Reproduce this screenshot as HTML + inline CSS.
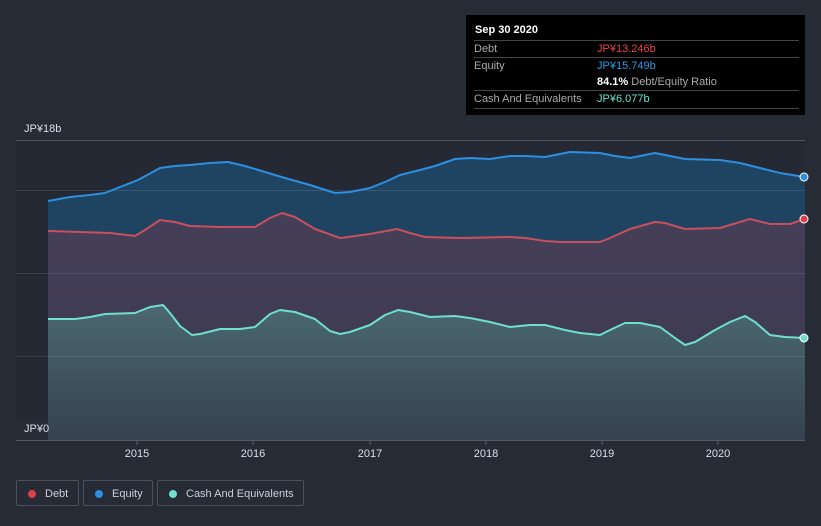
<!DOCTYPE html>
<html><head><meta charset="utf-8"><style>
body{margin:0;width:821px;height:526px;background:#262b36;font-family:"Liberation Sans",sans-serif;overflow:hidden;position:relative}
.tip{position:absolute;left:466px;top:15px;width:339px;height:100px;background:#000;color:#fff;font-size:11px}
.tip .r{position:absolute;left:8px;right:6px;border-top:1px solid #444;height:17px;line-height:17px;color:#aaa}
.leg{position:absolute;top:480px;height:26px;border:1px solid #4a505c;border-radius:2px;color:#ccd;font-size:11px;line-height:26px;box-sizing:border-box}
.leg i{position:absolute;left:11px;top:9px;width:8px;height:8px;border-radius:50%}
</style></head><body>
<svg width="821" height="526" style="position:absolute;left:0;top:0">
<rect x="16" y="140" width="789" height="300" fill="#242934"/>
<polygon fill="#1f4461" points="48,440 48,201 70,197 90,195 105,193 120,187 138,180 160,168 175,166 190,165 210,163 228,162 245,166 265,172 285,178 310,185 335,193 350,192 370,188 385,182 400,175 420,170 435,166 455,159 470,158 490,159 510,156 525,156 545,157 570,152 600,153 615,156 630,158 655,153 665,155 685,159 720,160 740,163 760,168 780,173 805,177 805,440"/>
<defs>
<linearGradient id="d" x1="0" y1="0" x2="0" y2="1"><stop offset="0" stop-color="#453f58"/><stop offset="1" stop-color="#3b3850"/></linearGradient>
<linearGradient id="g" x1="0" y1="0" x2="0" y2="1"><stop offset="0" stop-color="#4b6870"/><stop offset="1" stop-color="#35424f"/></linearGradient></defs>
<polygon fill="url(#d)" points="48,440 48,231 80,232 110,233 135,236 145,230 160,220 175,222 190,226 220,227 255,227 270,218 282,213 295,217 315,229 340,238 370,234 397,229 410,233 425,237 460,238 510,237 525,238 545,241 560,242 600,242 610,238 630,229 655,222 665,223 685,229 720,228 740,222 750,219 770,224 790,224 805,219 805,440"/>
<polygon fill="url(#g)" points="48,440 48,319 75,319 90,317 105,314 135,313 150,307 163,305 170,313 180,326 192,335 200,334 220,329 240,329 255,327 270,314 280,310 295,312 315,319 330,331 340,334 350,332 370,325 385,315 398,310 410,312 430,317 455,316 470,318 490,322 510,327 530,325 545,325 565,330 580,333 600,335 610,330 625,323 640,323 660,327 675,338 685,345 695,342 715,330 730,322 745,316 755,322 770,335 785,337 805,338 805,440"/>
<g stroke="#ffffff" stroke-opacity="0.1"><line x1="16" y1="140.5" x2="805" y2="140.5" stroke-opacity="0.2"/><line x1="16" y1="190.5" x2="805" y2="190.5"/><line x1="16" y1="273.5" x2="805" y2="273.5"/><line x1="16" y1="356.5" x2="805" y2="356.5"/></g>
<g fill="none" stroke-width="2" stroke-linejoin="round">
<polyline stroke="#2d8fe0" points="48,201 70,197 90,195 105,193 120,187 138,180 160,168 175,166 190,165 210,163 228,162 245,166 265,172 285,178 310,185 335,193 350,192 370,188 385,182 400,175 420,170 435,166 455,159 470,158 490,159 510,156 525,156 545,157 570,152 600,153 615,156 630,158 655,153 665,155 685,159 720,160 740,163 760,168 780,173 805,177"/>
<polyline stroke="#c8505e" points="48,231 80,232 110,233 135,236 145,230 160,220 175,222 190,226 220,227 255,227 270,218 282,213 295,217 315,229 340,238 370,234 397,229 410,233 425,237 460,238 510,237 525,238 545,241 560,242 600,242 610,238 630,229 655,222 665,223 685,229 720,228 740,222 750,219 770,224 790,224 805,219"/>
<polyline stroke="#6ee0cc" points="48,319 75,319 90,317 105,314 135,313 150,307 163,305 170,313 180,326 192,335 200,334 220,329 240,329 255,327 270,314 280,310 295,312 315,319 330,331 340,334 350,332 370,325 385,315 398,310 410,312 430,317 455,316 470,318 490,322 510,327 530,325 545,325 565,330 580,333 600,335 610,330 625,323 640,323 660,327 675,338 685,345 695,342 715,330 730,322 745,316 755,322 770,335 785,337 805,338"/>
</g>
<circle cx="804" cy="177" r="4" fill="#2d8fe0" stroke="#fff" stroke-width="1"/>
<circle cx="804" cy="219" r="4" fill="#e0404c" stroke="#fff" stroke-width="1"/>
<circle cx="804" cy="338" r="4" fill="#6ee0cc" stroke="#fff" stroke-width="1"/>
<line x1="16" y1="440.5" x2="805" y2="440.5" stroke="#555b66"/>
<g stroke="#555b66"><line x1="137" y1="440" x2="137" y2="445"/><line x1="253" y1="440" x2="253" y2="445"/><line x1="370" y1="440" x2="370" y2="445"/><line x1="486" y1="440" x2="486" y2="445"/><line x1="602" y1="440" x2="602" y2="445"/><line x1="718" y1="440" x2="718" y2="445"/></g>
<g fill="#dde" font-size="11" text-anchor="middle"><text x="137" y="457">2015</text><text x="253" y="457">2016</text><text x="370" y="457">2017</text><text x="486" y="457">2018</text><text x="602" y="457">2019</text><text x="718" y="457">2020</text></g>
<rect x="16" y="420" width="32" height="19" fill="#262b36"/>
<text x="24" y="132" fill="#dde" font-size="11">JP¥18b</text>
<text x="24" y="432" fill="#dde" font-size="11">JP¥0</text>
</svg>
<div class="tip">
<div style="position:absolute;left:9px;top:9px;font-weight:bold">Sep 30 2020</div>
<div class="r" style="top:25px">Debt<span style="position:absolute;left:123px;color:#e8414c">JP¥13.246b</span></div>
<div class="r" style="top:42px">Equity<span style="position:absolute;left:123px;color:#2d9be6">JP¥15.749b</span></div>
<div class="r" style="top:59px;border:0"><span style="position:absolute;left:123px;color:#aaa"><b style="color:#fff">84.1%</b> Debt/Equity Ratio</span></div>
<div class="r" style="top:75px;border-bottom:1px solid #444">Cash And Equivalents<span style="position:absolute;left:123px;color:#6ee0cc">JP¥6.077b</span></div>
</div>
<div class="leg" style="left:16px;width:63px"><i style="background:#e0404c"></i><span style="margin-left:28px">Debt</span></div>
<div class="leg" style="left:83px;width:70px"><i style="background:#2d8fe0"></i><span style="margin-left:28px">Equity</span></div>
<div class="leg" style="left:157px;width:147px"><i style="background:#6ee0cc"></i><span style="margin-left:28px">Cash And Equivalents</span></div>
</body></html>
